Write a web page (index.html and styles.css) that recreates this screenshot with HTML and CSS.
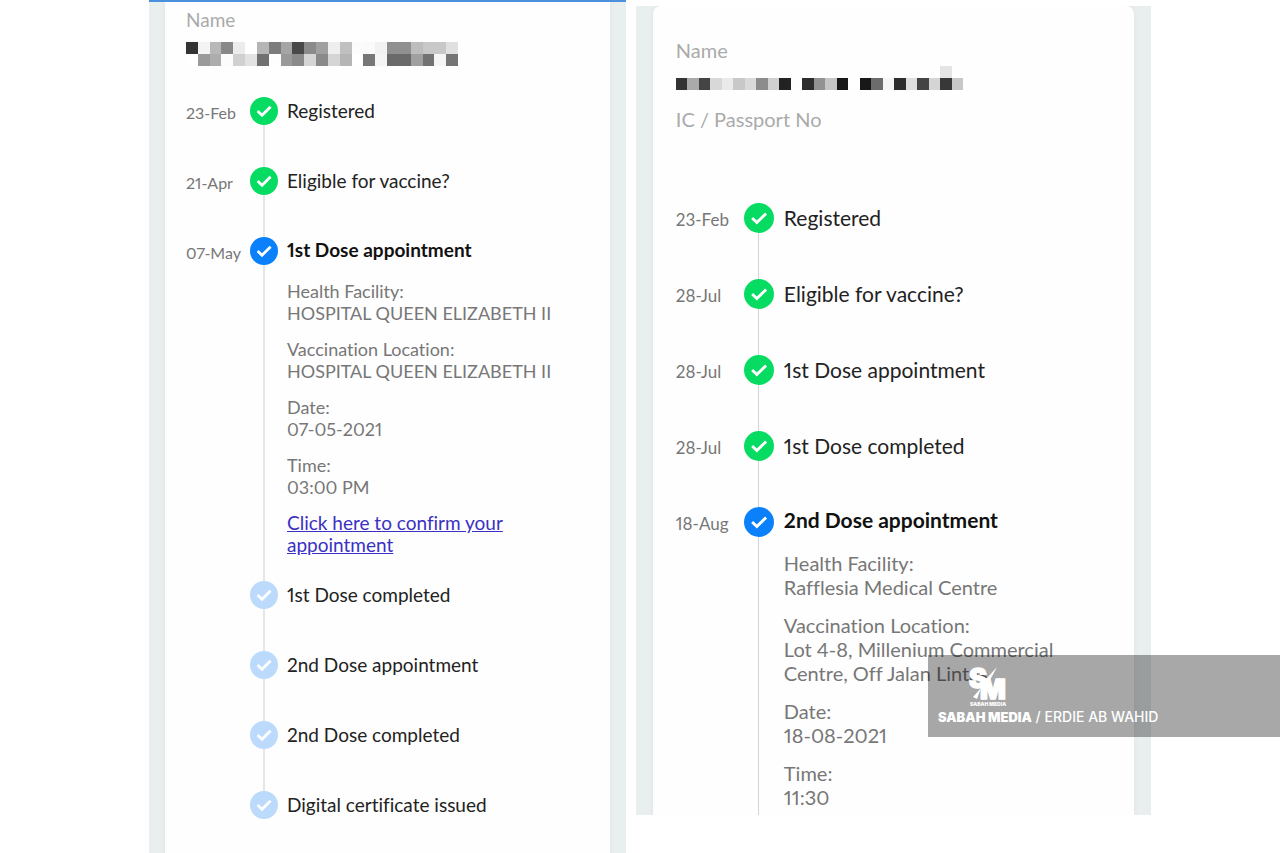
FILE: index.html
```
<!DOCTYPE html>
<html lang="en">

<head>
    <meta charset="UTF-8">
    <meta name="viewport" content="width=device-width, initial-scale=1.0">
    <title>Vaccination status</title>
    <link rel="stylesheet" href="styles.css">
</head>

<body>
    <!-- check mark shared by all steps -->
    <svg class="defs" width="0" height="0">
        <symbol id="check" viewBox="0 0 28 28">
            <path d="M7.6 14 L12 18.2 L20.6 9.8" fill="none" stroke="#fff" stroke-width="2.8" />
        </symbol>
    </svg>

    <main class="compare">
        <section class="phone phone-left">
            <div class="card">
                <div class="person">
                    <p class="label">Name</p>
                    <svg class="mosaic" id="nameLeft" viewBox="0 0 23 2" preserveAspectRatio="none"></svg>
                </div>
                <ol class="timeline">
                    <li class="step done">
                        <span class="date">23-Feb</span>
                        <span class="marker"><svg class="dot"><use href="#check" /></svg></span>
                        <h2 class="title">Registered</h2>
                    </li>
                    <li class="step done">
                        <span class="date">21-Apr</span>
                        <span class="marker"><svg class="dot"><use href="#check" /></svg></span>
                        <h2 class="title">Eligible for vaccine?</h2>
                    </li>
                    <li class="step current">
                        <span class="date">07-May</span>
                        <span class="marker"><svg class="dot"><use href="#check" /></svg></span>
                        <div class="content">
                            <h2 class="title">1st Dose appointment</h2>
                            <div class="details">
                                <p>Health Facility:<br>HOSPITAL QUEEN ELIZABETH II</p>
                                <p>Vaccination Location:<br>HOSPITAL QUEEN ELIZABETH II</p>
                                <p>Date:<br>07-05-2021</p>
                                <p>Time:<br>03:00 PM</p>
                                <p class="confirm"><a href="#">Click here to confirm your<br>appointment</a></p>
                            </div>
                        </div>
                    </li>
                    <li class="step todo">
                        <span class="date"></span>
                        <span class="marker"><svg class="dot"><use href="#check" /></svg></span>
                        <h2 class="title">1st Dose completed</h2>
                    </li>
                    <li class="step todo">
                        <span class="date"></span>
                        <span class="marker"><svg class="dot"><use href="#check" /></svg></span>
                        <h2 class="title">2nd Dose appointment</h2>
                    </li>
                    <li class="step todo">
                        <span class="date"></span>
                        <span class="marker"><svg class="dot"><use href="#check" /></svg></span>
                        <h2 class="title">2nd Dose completed</h2>
                    </li>
                    <li class="step todo last">
                        <span class="date"></span>
                        <span class="marker"><svg class="dot"><use href="#check" /></svg></span>
                        <h2 class="title">Digital certificate issued</h2>
                    </li>
                </ol>
            </div>
        </section>

        <section class="phone phone-right">
            <div class="card">
                <div class="person">
                    <p class="label">Name</p>
                    <svg class="mosaic" id="nameRight" viewBox="0 0 25 2" preserveAspectRatio="none"></svg>
                    <p class="label">IC / Passport No</p>
                </div>
                <ol class="timeline">
                    <li class="step done">
                        <span class="date">23-Feb</span>
                        <span class="marker"><svg class="dot"><use href="#check" /></svg></span>
                        <h2 class="title">Registered</h2>
                    </li>
                    <li class="step done">
                        <span class="date">28-Jul</span>
                        <span class="marker"><svg class="dot"><use href="#check" /></svg></span>
                        <h2 class="title">Eligible for vaccine?</h2>
                    </li>
                    <li class="step done">
                        <span class="date">28-Jul</span>
                        <span class="marker"><svg class="dot"><use href="#check" /></svg></span>
                        <h2 class="title">1st Dose appointment</h2>
                    </li>
                    <li class="step done">
                        <span class="date">28-Jul</span>
                        <span class="marker"><svg class="dot"><use href="#check" /></svg></span>
                        <h2 class="title">1st Dose completed</h2>
                    </li>
                    <li class="step current">
                        <span class="date">18-Aug</span>
                        <span class="marker"><svg class="dot"><use href="#check" /></svg></span>
                        <div class="content">
                            <h2 class="title">2nd Dose appointment</h2>
                            <div class="details">
                                <p>Health Facility:<br>Rafflesia Medical Centre</p>
                                <p>Vaccination Location:<br>Lot 4-8, Millenium Commercial<br>Centre, Off Jalan Lintas</p>
                                <p>Date:<br>18-08-2021</p>
                                <p>Time:<br>11:30</p>
                            </div>
                        </div>
                    </li>
                </ol>
            </div>
        </section>
    </main>

    <!-- photo credit -->
    <div class="credit">
        <svg class="logo" viewBox="0 0 40 42">
            <text class="logo-letter" x="1" y="22" font-size="27">S</text>
            <path d="M18 13 L29 1 L22 14 Z M5 31 L13 22 L9 33 Z" />
            <text class="logo-letter" x="12" y="33" font-size="27">M</text>
            <text class="logo-name" x="2" y="40" font-size="5">SABAH MEDIA</text>
        </svg>
        <p class="credit-text"><b>SABAH MEDIA</b> / ERDIE AB WAHID</p>
    </div>

    <script>
        // grey levels of the hidden names, one array per row
        var left = [
            ['333', 'f4f4f4', 'b8b8b8', '888', 'ececec', 'fff', 'b5b5b5', '7c7c7c', 'a5a5a5', '484848', '8a8a8a', 'a0a0a0',
                'eee', 'c0c0c0', 'fcfcfc', 'fafafa', 'f2f2f2', '909090', '909090', 'bdbdbd', 'c8c8c8', 'c8c8c8', 'e0e0e0'],
            ['fff', '9a9a9a', 'adadad', 'fcfcfc', 'd0d0d0', 'e2e2e2', '707070', 'fdfdfd', '999', '8a8a8a', 'd5d5d5', '8a8a8a',
                'd5d5d5', 'b5b5b5', 'fff', '777', 'f5f5f5', '6a6a6a', '6a6a6a', 'a0a0a0', '727272', 'f5f5f5', '757575']
        ];
        var right = [
            ['', '', '', '', '', '', '', '', '', '', '', '', '', '', '', '', '', '', '', '', '', '', '', 'e4e4e4', ''],
            ['333', 'aaa', '444', 'd8d8d8', 'eaeaea', 'c8c8c8', 'dadada', '8c8c8c', 'd0d0d0', '222', 'fdfdfd', '2d2d2d', '929292',
                'c5c5c5', '181818', 'fff', '181818', '6c6c6c', 'f5f5f5', '2d2d2d', 'dedede', '444', 'd5d5d5', '383838', 'c8c8c8']
        ];

        draw('#nameLeft', left);
        draw('#nameRight', right);

        function draw(id, rows) {
            var html = '';
            rows.forEach(function (row, y) {
                row.forEach(function (color, x) {
                    if (color) {
                        html += `<rect x="${x}" y="${y}" width="1" height="1" fill="#${color}" />`;
                    }
                })
            })
            document.querySelector(id).innerHTML = html;
        }
    </script>
</body>

</html>
```
FILE: styles.css
```
* {
    margin: 0;
    padding: 0;
    box-sizing: border-box;
}

body {
    position: relative;
    background-color: #fff;
    font-family: Lato, "Liberation Sans", sans-serif;
    font-variant-ligatures: none;
    font-variant-numeric: proportional-nums;
    color: #222;
    overflow-x: hidden;
}

.defs {
    position: absolute;
}

.compare {
    display: grid;
    grid-template-columns: 477fr 515fr;
    column-gap: 10px;
    align-items: start;
    min-height: 100vh;
    padding: 0 10.1% 0 11.64%;
}

.phone {
    background-color: #e9eeef;
    overflow: hidden;
}

.card {
    background-color: #fefefe;
    box-shadow: 0 0 4px #dde3e5;
}

.phone-left {
    --dot: 28px;
    --step: 70px;
    --date: 64px;
    --gap: 9px;
    --line: 22px;
    min-height: 100vh;
    padding: 0 16px;
    border-top: 2px solid #4a90dc;
    font-size: 19px;
}

.phone-left .card {
    min-height: 851px;
    padding: 6px 20px 0 21px;
}

.phone-right {
    --dot: 30px;
    --step: 76px;
    --date: 68px;
    --gap: 10px;
    --line: 24px;
    margin-top: 6px;
    padding: 0 17px;
    font-size: 21px;
}

.phone-right .card {
    padding: 32px 20px 0 23px;
    border-radius: 8px 8px 0 0;
}

.label {
    line-height: 24px;
    color: #aaa;
}

.phone-right .label {
    font-size: 20px;
}

.mosaic {
    display: block;
    shape-rendering: crispEdges;
}

.phone-left .mosaic {
    width: 272px;
    height: 24px;
    margin: 10px 0 31px;
}

.phone-right .mosaic {
    width: 287px;
    height: 24px;
    margin: 4px 0 17px;
}

.phone-right .person {
    padding-bottom: 72px;
}

.timeline {
    list-style: none;
}

.step {
    display: grid;
    grid-template-columns: var(--date) var(--dot) 1fr;
    min-height: var(--step);
}

.date {
    padding-top: 2px;
    font-size: 16px;
    line-height: var(--dot);
    color: #777;
}

.phone-right .date {
    font-size: 17px;
}

.marker {
    display: flex;
    flex-direction: column;
    align-items: center;
}

/* line down to the next step */
.marker::after {
    content: "";
    flex: 1;
    width: 2px;
    background-color: #e6e6e8;
}

.phone-right .marker::after {
    width: 1px;
    background-color: #d4d4d6;
}

.last .marker::after {
    display: none;
}

.dot {
    width: var(--dot);
    height: var(--dot);
    border-radius: 50%;
}

.done .dot {
    background-color: #07dc62;
}

.current .dot {
    background-color: #0a80fa;
}

.todo .dot {
    background-color: #bbdafc;
}

.title {
    padding-left: var(--gap);
    font-size: inherit;
    font-weight: 400;
    line-height: var(--dot);
}

.current .title {
    font-weight: 700;
    line-height: 26px;
    color: #111;
}

.details {
    display: flex;
    flex-direction: column;
    gap: 14px;
    padding: 17px 0 25px var(--gap);
    font-size: 18px;
    line-height: var(--line);
    color: #777;
}

.phone-right .details {
    padding: 18px 0 6px var(--gap);
    font-size: 20px;
}

.confirm {
    font-size: 19px;
}

.details a {
    color: #3a30c4;
}

.credit {
    position: absolute;
    top: 655px;
    right: 0;
    width: 27.5%;
    height: 82px;
    padding: 11px 10px 0;
    background-color: rgba(0, 0, 0, 0.34);
    color: #fff;
    white-space: nowrap;
}

.logo {
    display: block;
    width: 40px;
    height: 42px;
    margin-left: 30px;
    fill: #fff;
    overflow: visible;
}

.logo-letter,
.logo-name {
    font-family: Inter, sans-serif;
    font-weight: 900;
}

.logo-letter {
    stroke: #fff;
    stroke-width: 1.4;
}

.credit-text {
    font-family: Inter, sans-serif;
    font-size: 14px;
    line-height: 18px;
    font-weight: 500;
}

.credit-text b {
    font-size: 13px;
    font-weight: 900;
}
```
